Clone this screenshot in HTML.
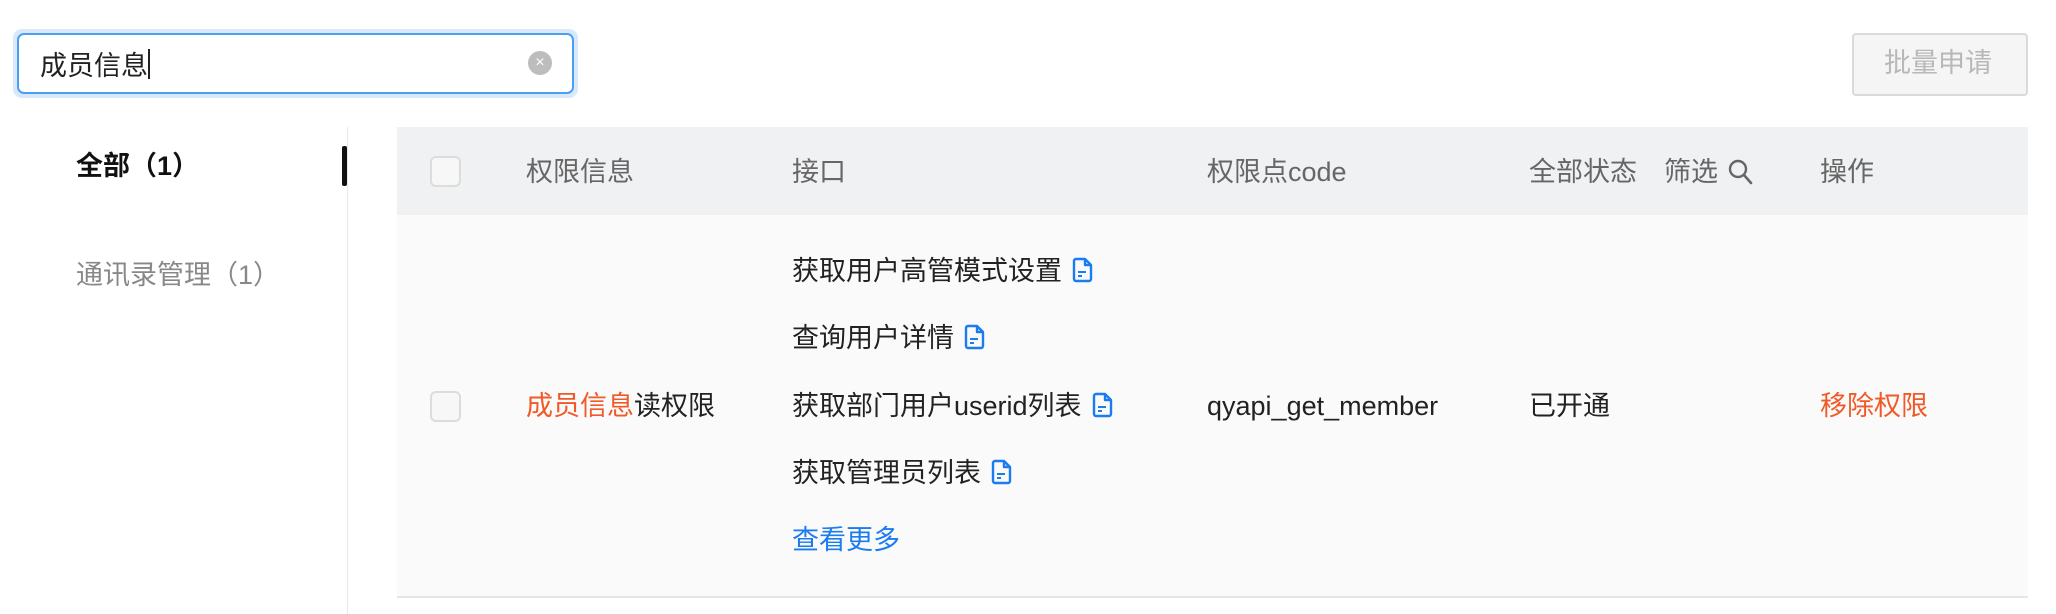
<!DOCTYPE html>
<html><head><meta charset="utf-8"><style>
body{margin:0;width:2056px;height:614px;background:#fff;position:relative;overflow:hidden;font-family:"Liberation Sans","Noto Sans CJK SC",sans-serif;font-size:27px;color:#222}
.a{position:absolute;white-space:nowrap;line-height:1}
.cb{position:absolute;width:27px;height:27px;border:2px solid #dcdcdc;border-radius:6px;background:#f7f7f7}
.doc{display:inline-block;vertical-align:-3px;margin-left:10px}
.h{color:#666}
</style></head><body>
<div class="a" style="left:13px;top:29px;width:565px;height:69px;border-radius:9px;background:#d7e9fb"></div>
<div class="a" style="left:17px;top:33px;width:553px;height:57px;border:2px solid #4b9ef3;border-radius:7px;background:#fff"></div>
<div class="a" style="left:40px;top:49px">成员信息<span style="display:inline-block;width:2px;height:30px;background:#222;vertical-align:-4px"></span></div>
<div class="a" style="left:528px;top:51px;width:24px;height:24px;border-radius:50%;background:#bdbdbd;color:#fff;font-size:16px;line-height:23px;text-align:center">×</div>

<div class="a" style="left:1852px;top:33px;width:172px;height:59px;border:2px solid #dadada;border-radius:4px;background:#f5f5f5"></div>
<div class="a" style="left:1884px;top:50px;color:#b8b8b8">批量申请</div>

<div class="a" style="left:76px;top:153px;font-weight:bold;color:#111">全部（1）</div>
<div class="a" style="left:342px;top:146px;width:5px;height:40px;background:#111;border-radius:2px"></div>
<div class="a" style="left:347px;top:127px;width:1px;height:487px;background:#e8e8e8"></div>
<div class="a" style="left:76px;top:262px;color:#888">通讯录管理（1）</div>

<div class="a" style="left:397px;top:127px;width:1631px;height:88px;background:#f0f1f3"></div>
<div class="a" style="left:397px;top:215px;width:1631px;height:381px;background:#fafafa;border-bottom:2px solid #e6e6e6"></div>
<div class="cb" style="left:430px;top:156px"></div>
<div class="a h" style="left:526px;top:159px">权限信息</div>
<div class="a h" style="left:792px;top:159px">接口</div>
<div class="a h" style="left:1207px;top:159px">权限点code</div>
<div class="a h" style="left:1529px;top:159px">全部状态</div>
<div class="a h" style="left:1664px;top:159px">筛选</div>
<svg class="a" style="left:1728px;top:158px" width="26" height="28" viewBox="0 0 26 28"><circle cx="10" cy="11" r="8" fill="none" stroke="#666" stroke-width="2.4"/><path d="M16 17l7 8" stroke="#666" stroke-width="2.6" stroke-linecap="round"/></svg>
<div class="a h" style="left:1820px;top:159px">操作</div>

<div class="a" style="left:792px;top:257px">获取用户高管模式设置<svg class="doc" width="22" height="26" viewBox="0 0 22 26"><path d="M4 2h9l6 6v14a2 2 0 0 1-2 2H4a2 2 0 0 1-2-2V4a2 2 0 0 1 2-2z M13 2v6h6" fill="none" stroke="#1a7cf0" stroke-width="2.4" stroke-linejoin="round"/><path d="M6 15h8M6 19h4" stroke="#1a7cf0" stroke-width="2"/></svg></div>
<div class="a" style="left:792px;top:324px">查询用户详情<svg class="doc" width="22" height="26" viewBox="0 0 22 26"><path d="M4 2h9l6 6v14a2 2 0 0 1-2 2H4a2 2 0 0 1-2-2V4a2 2 0 0 1 2-2z M13 2v6h6" fill="none" stroke="#1a7cf0" stroke-width="2.4" stroke-linejoin="round"/><path d="M6 15h8M6 19h4" stroke="#1a7cf0" stroke-width="2"/></svg></div>
<div class="a" style="left:792px;top:392px">获取部门用户userid列表<svg class="doc" width="22" height="26" viewBox="0 0 22 26"><path d="M4 2h9l6 6v14a2 2 0 0 1-2 2H4a2 2 0 0 1-2-2V4a2 2 0 0 1 2-2z M13 2v6h6" fill="none" stroke="#1a7cf0" stroke-width="2.4" stroke-linejoin="round"/><path d="M6 15h8M6 19h4" stroke="#1a7cf0" stroke-width="2"/></svg></div>
<div class="a" style="left:792px;top:459px">获取管理员列表<svg class="doc" width="22" height="26" viewBox="0 0 22 26"><path d="M4 2h9l6 6v14a2 2 0 0 1-2 2H4a2 2 0 0 1-2-2V4a2 2 0 0 1 2-2z M13 2v6h6" fill="none" stroke="#1a7cf0" stroke-width="2.4" stroke-linejoin="round"/><path d="M6 15h8M6 19h4" stroke="#1a7cf0" stroke-width="2"/></svg></div>
<div class="a" style="left:792px;top:527px;color:#1a7cf0">查看更多</div>

<div class="cb" style="left:430px;top:391px"></div>
<div class="a" style="left:526px;top:393px"><span style="color:#f05a28">成员信息</span>读权限</div>
<div class="a" style="left:1207px;top:393px">qyapi_get_member</div>
<div class="a" style="left:1529px;top:393px">已开通</div>
<div class="a" style="left:1820px;top:393px;color:#f05a28">移除权限</div>
</body></html>
